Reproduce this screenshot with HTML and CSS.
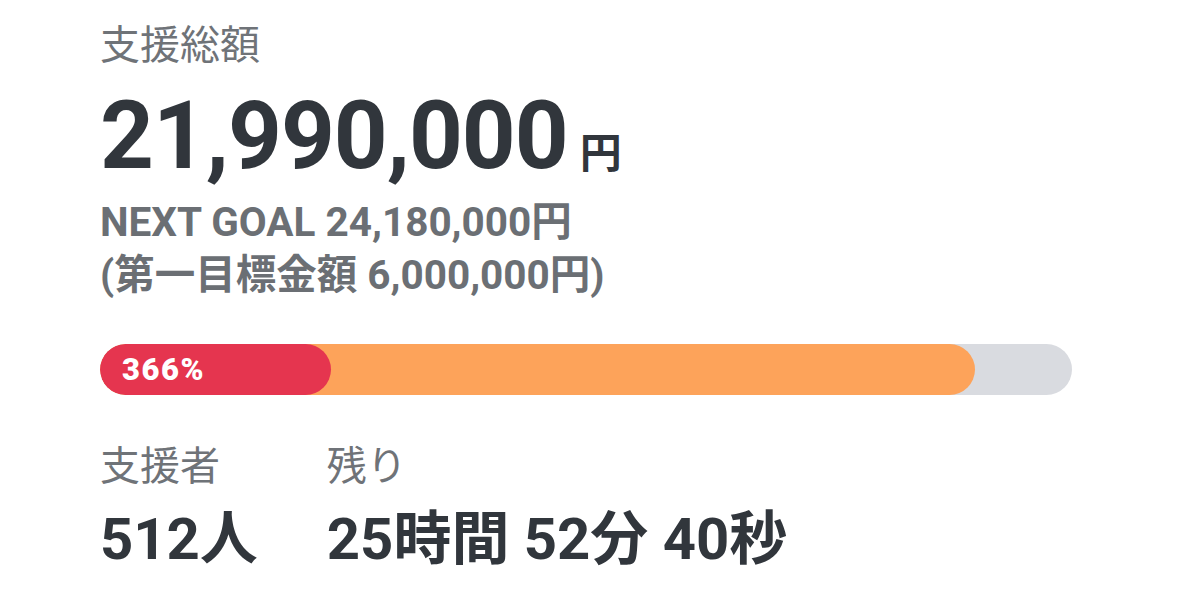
FILE: index.html
```html
<!DOCTYPE html>
<html lang="ja">
<head>
<meta charset="utf-8">
<link rel="stylesheet" href="styles.css">
</head>
<body>
<div class="panel">
  <div class="label">支援総額</div>
  <div class="total"><span class="total-num">21,990,000</span><span class="total-unit">円</span></div>
  <div class="goals">
    <div class="goal">NEXT GOAL 24,180,000円</div>
    <div class="goal">(第一目標金額 6,000,000円)</div>
  </div>
  <div class="bar">
    <div class="bar-fill" style="width: 90%"></div>
    <div class="bar-done"><span class="bar-pct">366%</span></div>
  </div>
  <div class="stats">
    <div class="stat">
      <div class="label">支援者</div>
      <div class="stat-value">512人</div>
    </div>
    <div class="stat">
      <div class="label">残り</div>
      <div class="stat-value">25時間 52分 40秒</div>
    </div>
  </div>
</div>
</body>
</html>
```

FILE: styles.css
```css
html, body {
  margin: 0;
  padding: 0;
  background: #ffffff;
}
body {
  font-family: Roboto, "Noto Sans CJK JP", sans-serif;
  color: #31363c;
}
.panel {
  padding: 22px 0 0 100px;
  width: 974px;
}
.label {
  font-size: 40px;
  line-height: 48px;
  color: #6f7378;
  font-weight: 400;
}
.total {
  display: flex;
  align-items: baseline;
  margin-top: 16px;
  height: 100px;
}
.total-num {
  font-size: 94px;
  font-weight: 700;
  line-height: 100px;
  letter-spacing: -1px;
}
.total-unit {
  font-size: 42px;
  font-weight: 700;
  margin-left: 12px;
}
.goals {
  margin-top: 10px;
}
.goal {
  font-size: 40.5px;
  font-weight: 700;
  color: #6b6f74;
  line-height: 53px;
}
.bar {
  position: relative;
  margin-top: 42px;
  height: 51px;
  width: 972px;
  border-radius: 26px;
  background: #d9dbe0;
  overflow: hidden;
}
.bar-fill {
  height: 100%;
  border-radius: 26px;
  background: #fda35a;
}
.bar-done {
  position: absolute;
  left: 0;
  top: 0;
  width: 231px;
  height: 100%;
  border-radius: 26px;
  background: #e5354f;
  display: flex;
  align-items: center;
  padding-left: 22px;
  box-sizing: border-box;
}
.bar-pct {
  color: #ffffff;
  font-size: 31px;
  font-weight: 900;
  letter-spacing: 1.5px;
}
.stats {
  display: flex;
  gap: 69px;
  margin-top: 46px;
}
.stat .label {
  line-height: 52px;
}
.stat-value {
  font-size: 58px;
  font-weight: 700;
  line-height: 70px;
  margin-top: 11px;
}
```
